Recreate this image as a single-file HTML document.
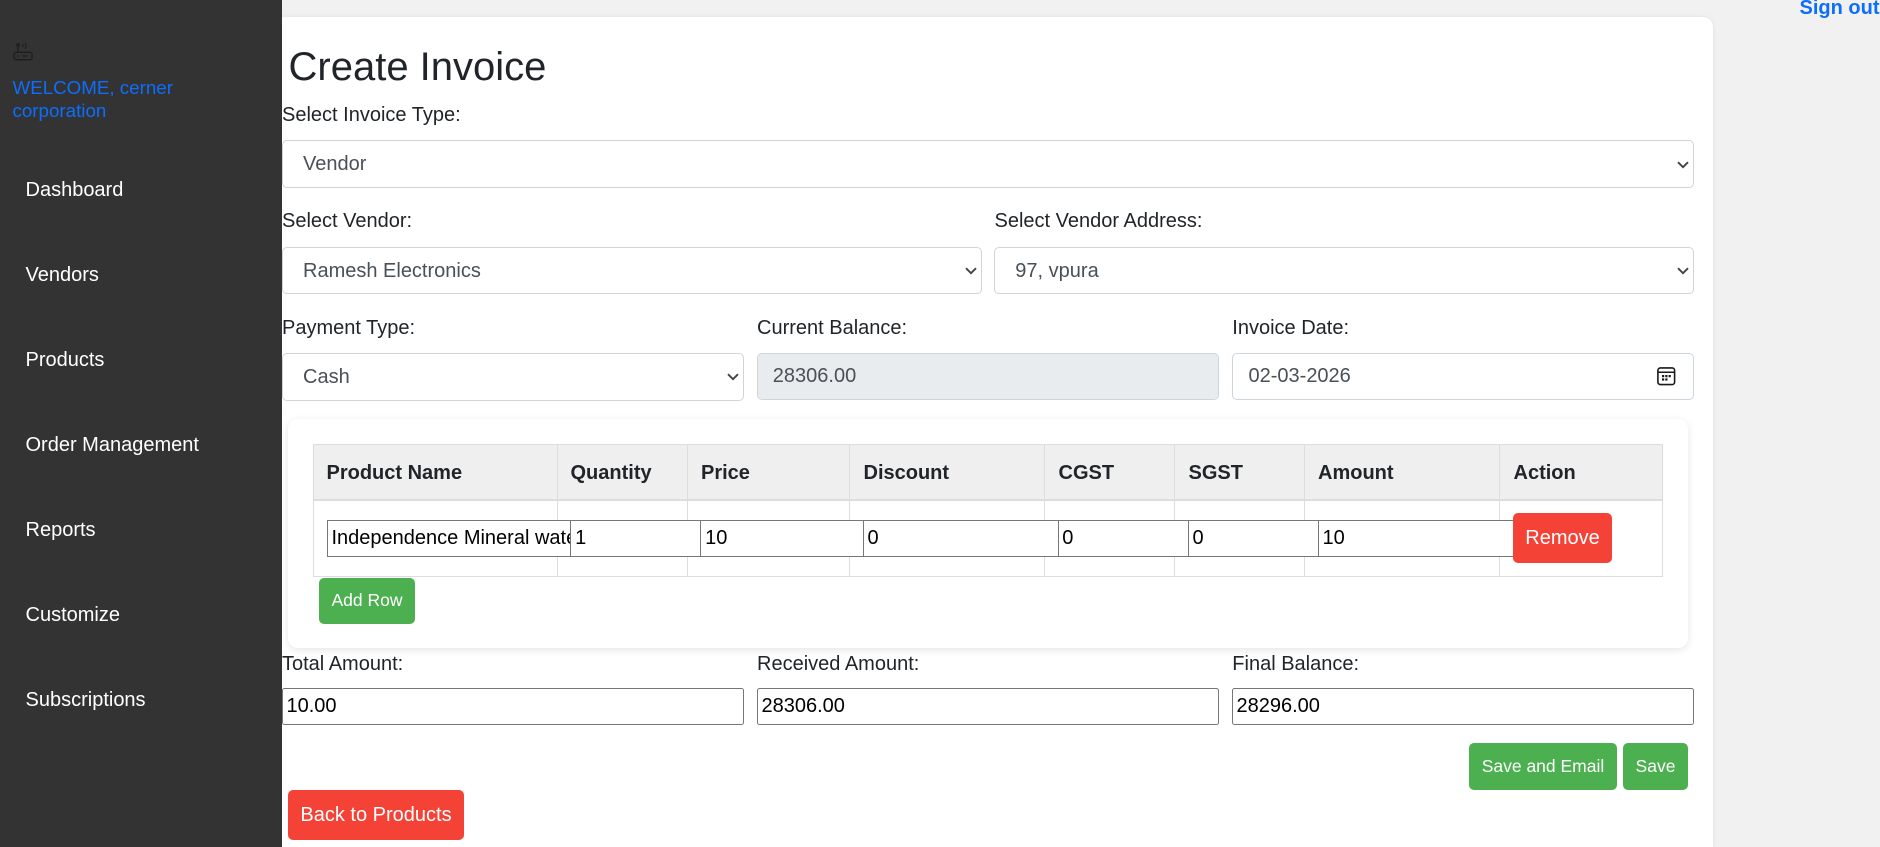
<!DOCTYPE html>
<html><head><meta charset="utf-8"><title>Create Invoice</title>
<style>
*{box-sizing:border-box}
html,body{margin:0;padding:0;width:1880px;height:847px;overflow:hidden;background:#f1f1f1;font-family:"Liberation Sans",Arial,sans-serif;font-size:20px;color:#212529}
#root{position:absolute;left:0;top:0;width:1880px;height:847px;overflow:hidden}
.a{position:absolute;white-space:nowrap;line-height:30px;height:30px}
#side{position:absolute;left:0;top:0;width:282px;height:847px;background:#333;z-index:5}
#card{position:absolute;left:270px;top:16.5px;width:1443px;height:830.5px;background:#fff;border-radius:10px 10px 0 0;box-shadow:0 0 4px rgba(0,0,0,.08)}
.m{color:#fff;left:25.5px}
select,input{position:absolute;margin:0;font:20px "Liberation Sans",Arial,sans-serif;outline:0}
select,.fc{background:#fff;border:1.25px solid #ced4da;border-radius:5px;color:#495057;appearance:none;-webkit-appearance:none;height:47.5px}
select{padding:0 0 0 20px}
.fc{padding:0 15px}
.ti{top:520px;height:36.5px;border:1.25px solid #767676;background:#fff;color:#000;padding:0 0 0 3.8px;border-radius:0}
.bi{top:688px;height:37px;border:1.25px solid #767676;background:#fff;color:#000;padding:0 3.5px;border-radius:2.5px}
.chev{position:absolute;width:12px;height:8px}
#sub{position:absolute;left:288px;top:419px;width:1400px;height:229px;background:#fff;border-radius:10px;box-shadow:0 2px 8px rgba(0,0,0,.1)}
.hd{position:absolute;left:313px;top:444px;width:1350px;height:57px;background:#efefef;border:1.25px solid #ddd;border-bottom-width:2px}
.bd{position:absolute;left:313px;top:500px;width:1350px;height:77px;border:1.25px solid #ddd;border-top:0}
.v{position:absolute;top:444px;height:133px;width:1.25px;background:#ddd}
.th{font-weight:bold;top:457.5px}
button{position:absolute;margin:0;border:0;color:#fff;font-family:"Liberation Sans",Arial,sans-serif;border-radius:5px;padding:0;white-space:nowrap}
.g{background:#4caf50;font-size:17.5px}
.r{background:#f44336;font-size:20px}
</style></head><body>
<div id="root">
<div id="card"></div>
<div class="a" style="left:1799.5px;top:-7.5px;font-weight:bold;color:#0d6efd">Sign out</div>

<div id="side">
<svg style="position:absolute;left:13px;top:42px" width="20" height="19" viewBox="0 0 20 19" fill="none" stroke="#1e1e1e" stroke-width="1.3"><rect x="1" y="10.3" width="18" height="7.4" rx="2"/><circle cx="5" cy="3" r="1.3"/><path d="M5 4.300v6M4.300 14h1.400M9.500 14h5"/><path d="M9.500 1.800q1 1.700 0 3.400M12 .8q2 3 0 6" stroke-width="1.100"/></svg>
<div class="a" style="left:12.500px;top:72.500px;color:#0d6efd;font-size:18.75px">WELCOME, cerner</div>
<div class="a" style="left:12.500px;top:96px;color:#0d6efd;font-size:18.75px">corporation</div>
<div class="a m" style="top:175px">Dashboard</div>
<div class="a m" style="top:260px">Vendors</div>
<div class="a m" style="top:345px">Products</div>
<div class="a m" style="top:430px">Order Management</div>
<div class="a m" style="top:515px">Reports</div>
<div class="a m" style="top:600px">Customize</div>
<div class="a m" style="top:685px">Subscriptions</div>
</div>

<div class="a" style="left:288.5px;top:46.500px;font-size:40px;line-height:40px;height:40px">Create Invoice</div>

<div class="a" style="left:282px;top:100.3px">Select Invoice Type:</div>
<select style="left:282px;top:140.3px;width:1412px"><option>Vendor</option></select>
<svg class="chev" style="left:1677px;top:161px" viewBox="0 0 12 8" fill="none" stroke="#444" stroke-width="1.900"><path d="M1 1.200l5 5 5-5"/></svg>

<div class="a" style="left:282px;top:206.300px">Select Vendor:</div>
<div class="a" style="left:994.5px;top:206.300px">Select Vendor Address:</div>
<select style="left:282px;top:246.8px;width:700px"><option>Ramesh Electronics</option></select>
<select style="left:994.3px;top:246.8px;width:699.7px"><option>97, vpura</option></select>
<svg class="chev" style="left:965px;top:267px" viewBox="0 0 12 8" fill="none" stroke="#444" stroke-width="1.900"><path d="M1 1.200l5 5 5-5"/></svg>
<svg class="chev" style="left:1677px;top:267px" viewBox="0 0 12 8" fill="none" stroke="#444" stroke-width="1.900"><path d="M1 1.200l5 5 5-5"/></svg>

<div class="a" style="left:282px;top:313.300px">Payment Type:</div>
<div class="a" style="left:757px;top:313.300px">Current Balance:</div>
<div class="a" style="left:1232.300px;top:313.300px">Invoice Date:</div>
<select style="left:282px;top:353px;width:462.300px"><option>Cash</option></select>
<svg class="chev" style="left:727px;top:373px" viewBox="0 0 12 8" fill="none" stroke="#444" stroke-width="1.900"><path d="M1 1.200l5 5 5-5"/></svg>
<input class="fc" style="left:756.800px;top:352.500px;width:462.300px;background:#e9ecef" value="28306.00" disabled>
<input class="fc" style="left:1232px;top:352.500px;width:462px;padding-left:15.500px" value="02-03-2026">
<svg style="position:absolute;left:1657px;top:367px" width="18.500" height="18.500" viewBox="0 0 18.500 18.500" fill="none"><rect x=".9" y=".9" width="16.700" height="16.700" rx="2.500" stroke="#1a1a1a" stroke-width="1.600"/><path d="M1 5.300h16.500" stroke="#1a1a1a" stroke-width="1.500"/><path d="M5 8h2.200v2.200H5zM8.300 8h2.200v2.200H8.300zM11.600 8h2.200v2.200h-2.200zM5 11.400h2.200v2.200H5zM8.300 11.400h2.200v2.200H8.300z" fill="#1a1a1a"/></svg>

<div id="sub"></div>
<div class="hd"></div><div class="bd"></div>
<div class="v" style="left:557px"></div><div class="v" style="left:687px"></div><div class="v" style="left:849px"></div><div class="v" style="left:1044px"></div><div class="v" style="left:1174px"></div><div class="v" style="left:1304px"></div><div class="v" style="left:1499px"></div>
<div class="a th" style="left:326.500px">Product Name</div>
<div class="a th" style="left:570.500px">Quantity</div>
<div class="a th" style="left:701px">Price</div>
<div class="a th" style="left:863.500px">Discount</div>
<div class="a th" style="left:1058.500px">CGST</div>
<div class="a th" style="left:1188.500px">SGST</div>
<div class="a th" style="left:1318px">Amount</div>
<div class="a th" style="left:1513.500px">Action</div>

<input class="ti" style="left:327.300px;width:250px;padding-left:3.200px" value="Independence Mineral water">
<input class="ti" style="left:570.300px;width:135px" value="1">
<input class="ti" style="left:700.300px;width:168px" value="10">
<input class="ti" style="left:863.300px;width:200px;padding-left:3.200px" value="0">
<input class="ti" style="left:1058px;width:135px;padding-left:3.200px" value="0">
<input class="ti" style="left:1188.300px;width:135px;padding-left:3.200px" value="0">
<input class="ti" style="left:1317.700px;width:200px" value="10">
<button class="r" style="left:1513px;top:513px;width:99px;height:50px">Remove</button>
<button class="g" style="left:319px;top:577.500px;width:96px;height:46px">Add Row</button>

<div class="a" style="left:282px;top:648.800px">Total Amount:</div>
<div class="a" style="left:757px;top:648.800px">Received Amount:</div>
<div class="a" style="left:1232.300px;top:648.800px">Final Balance:</div>
<input class="bi" style="left:282px;width:462px" value="10.00">
<input class="bi" style="left:757px;width:462px" value="28306.00">
<input class="bi" style="left:1232px;width:462px" value="28296.00">

<button class="g" style="left:1469px;top:742.500px;width:148px;height:47px">Save and Email</button>
<button class="g" style="left:1623px;top:742.500px;width:65px;height:47px">Save</button>
<button class="r" style="left:288px;top:790px;width:176px;height:50px">Back to Products</button>
</div>
</body></html>
